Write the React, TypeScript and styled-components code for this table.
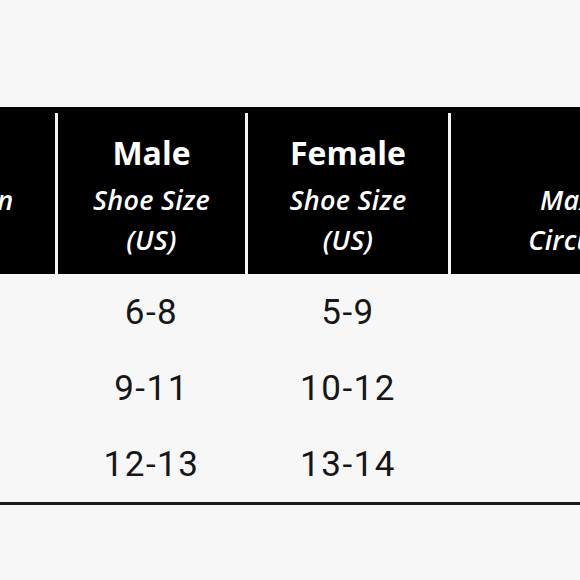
import React from "react";
import styled, { createGlobalStyle } from "styled-components";

const GlobalStyles = createGlobalStyle`
  *, *::before, *::after {
    box-sizing: border-box;
  }

  * {
    margin: 0;
    padding: 0;
  }

  html, body, #root {
    height: 100%;
  }

  body {
    background: #f7f7f7;
    overflow: hidden;
    font-family: Roboto, "Liberation Sans", sans-serif;
    -webkit-font-smoothing: antialiased;
  }
`;

type Column = {
  title: string;
  lines: string[];
};

const columns: Column[] = [
  { title: "", lines: ["Calf Design", ""] },
  { title: "Male", lines: ["Shoe Size", "(US)"] },
  { title: "Female", lines: ["Shoe Size", "(US)"] },
  { title: "", lines: ["Max Calf (in)", "Circumference"] },
];

const rows: string[][] = [
  ["S", "6-8", "5-9", ""],
  ["M", "9-11", "10-12", ""],
  ["L", "12-13", "13-14", ""],
];

const App = () => {
  return (
    <Page>
      <GlobalStyles />
      <Table>
        <HeaderRow>
          {columns.map((col, i) => (
            <HeaderCell key={i} $first={i === 0}>
              <Title>{col.title}</Title>
              {col.lines.map((line, j) => (
                <SubLine key={j}>{line}</SubLine>
              ))}
            </HeaderCell>
          ))}
        </HeaderRow>
        {rows.map((row, i) => (
          <BodyRow key={i}>
            {row.map((cell, j) => (
              <BodyCell key={j}>{j === 0 ? "" : cell}</BodyCell>
            ))}
          </BodyRow>
        ))}
      </Table>
    </Page>
  );
};

export default App;

const Page = styled.div`
  width: 580px;
  height: 580px;
  overflow: hidden;
  padding-top: 107px;
`;

const Table = styled.div`
  width: 1000px;
  margin-left: -135px;
  border-bottom: 3px solid #1a1a1a;
`;

const gridColumns = "190px 190px 203px 340px";

const HeaderRow = styled.div`
  display: grid;
  grid-template-columns: ${gridColumns};
  background: #000;
  padding-top: 6px;
`;

const HeaderCell = styled.div<{ $first?: boolean }>`
  height: 161px;
  display: flex;
  flex-direction: column;
  align-items: center;
  justify-content: center;
  border-left: ${(p) => (p.$first ? "none" : "3px solid #f4f4f4")};
  padding-right: ${(p) => (p.$first ? "34px" : "0")};
  padding-top: 4px;
  color: #fff;
  font-family: "Open Sans", "Liberation Sans", sans-serif;
  white-space: nowrap;
`;

const Title = styled.div`
  height: 44px;
  line-height: 44px;
  margin-bottom: 5px;
  font-size: 32px;
  font-weight: 700;
`;

const SubLine = styled.div`
  height: 40px;
  line-height: 40px;
  font-size: 27px;
  font-style: italic;
  font-weight: 600;
  letter-spacing: 0.3px;
`;

const BodyRow = styled.div`
  display: grid;
  grid-template-columns: ${gridColumns};
  height: 76px;
`;

const BodyCell = styled.div`
  display: flex;
  align-items: center;
  justify-content: center;
  padding-left: 3px;
  font-size: 35px;
  letter-spacing: 1.5px;
  color: #161616;
`;
